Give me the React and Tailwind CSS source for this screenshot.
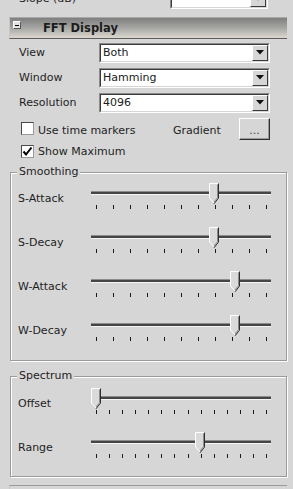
import React from "react";

function Combo({ value, wide }) {
  return (
    <div
      className={
        (wide ? "w-[171px] h-[20px]" : "w-[98px] h-[21px]") +
        " flex border border-t-[#8a8a8a] border-l-[#8a8a8a] border-r-white border-b-white"
      }
    >
      <div className="flex flex-1 border border-t-[#3a3a3a] border-l-[#3a3a3a] border-r-[#d6d6d6] border-b-[#d6d6d6] bg-white">
        <div className="flex-1 pl-[2px] leading-[16px] text-[#1a1a1a]">{value}</div>
        <div className="w-[16px] h-full flex items-center justify-center bg-[#d6d6d6] border border-t-white border-l-white border-r-[#3a3a3a] border-b-[#3a3a3a]">
          <svg width="8" height="5" viewBox="0 0 8 5">
            <polygon points="0,0 8,0 4,4.5" fill="#111" />
          </svg>
        </div>
      </div>
    </div>
  );
}

function Check({ checked }) {
  return (
    <div className="w-[13px] h-[13px] bg-white border border-t-[#4a4a4a] border-l-[#4a4a4a] border-r-[#9a9a9a] border-b-[#9a9a9a] flex items-center justify-center">
      {checked && (
        <svg width="11" height="11" viewBox="0 0 11 11">
          <path d="M1.5 5.5 L4 8.5 L9.5 1.5" stroke="#000" strokeWidth="2" fill="none" />
        </svg>
      )}
    </div>
  );
}

function Handle() {
  return (
    <svg width="11" height="22" viewBox="0 0 11 22">
      <polygon points="0.5,0.5 9.5,0.5 9.5,15 5,20.5 0.5,15" fill="#dadada" />
      <polyline points="0.5,15 0.5,0.5 9.5,0.5" stroke="#ffffff" fill="none" />
      <polyline points="0.5,15 5,20" stroke="#ffffff" fill="none" />
      <polyline points="9.5,0.5 9.5,15 5,20.8" stroke="#2e2e2e" fill="none" />
      <polyline points="8.5,1.5 8.5,14.6 5,19" stroke="#8a8a8a" fill="none" />
    </svg>
  );
}

function Slider({ label, pos, ticks }) {
  const tickList = [];
  for (let i = 0; i < ticks; i++) {
    tickList.push(Math.round(5 + (i * 170) / (ticks - 1)));
  }
  return (
    <div className="flex h-[30px]">
      <div className="w-[80px] pl-[7px] pt-[9px] leading-[13px]">{label}</div>
      <div className="relative w-[180px] h-[30px]">
        <div className="absolute left-0 right-0 top-[8px] h-[4px] border-t border-b border-t-[#8c8c8c] border-b-[#f4f4f4] bg-[#454545]" />
        {tickList.map((x, i) => (
          <div
            key={i}
            className="absolute top-[22px] h-[4px] w-[1px] bg-[#1a1a1a]"
            style={{ left: x }}
          />
        ))}
        <div className="absolute top-0" style={{ left: pos }}>
          <Handle />
        </div>
      </div>
    </div>
  );
}

function Group({ title, className, children }) {
  return (
    <div
      className={
        "relative ml-[10px] w-[277px] border border-[#9a9a9a] shadow-[inset_1px_1px_0_#ffffff,1px_1px_0_#ffffff] " +
        className
      }
    >
      <div className="absolute left-[6px] top-[-8px] px-[2px] bg-[#d6d6d6] leading-[13px]">{title}</div>
      {children}
    </div>
  );
}

export default function App() {
  return (
    <div className="w-[293px] h-[489px] overflow-hidden bg-[#d6d6d6] font-['DejaVu_Sans',sans-serif] text-[11px] leading-[13px] text-[#1e1e1e] flex flex-col">
      {/* partially visible row */}
      <div className="mt-[-12px] h-[21px] flex items-center">
        <div className="w-[170px] pl-[19px]">Slope (dB)</div>
        <Combo value="" />
      </div>

      {/* section header */}
      <div className="mt-[8px] ml-[9px] w-[278px] h-[22px] flex border-t border-b border-l border-t-[#a8a8a8] border-b-[#5c5c5c] border-l-[#c8c8c8] bg-gradient-to-b from-[#7f7f7f] via-[#a6a6a4] to-[#dcd8cf]">
        <div className="pl-[3px] pt-[3px]">
          <div className="w-[8px] h-[8px] flex items-center justify-center bg-[#e4e4e4] border border-t-white border-l-white border-r-[#5a5a5a] border-b-[#5a5a5a]">
            <div className="w-[4px] h-[1px] bg-black" />
          </div>
        </div>
        <div className="ml-[22px] pt-[4px] font-bold text-[11.5px] leading-[13px] text-[#1c1c1c]">FFT Display</div>
      </div>

      {/* combos */}
      <div className="mt-[4px] flex items-center h-[20px]">
        <div className="w-[99px] pl-[19px]">View</div>
        <Combo value="Both" wide />
      </div>
      <div className="mt-[5px] flex items-center h-[20px]">
        <div className="w-[99px] pl-[19px]">Window</div>
        <Combo value="Hamming" wide />
      </div>
      <div className="mt-[5px] flex items-center h-[20px]">
        <div className="w-[99px] pl-[19px]">Resolution</div>
        <Combo value="4096" wide />
      </div>

      {/* checkboxes */}
      <div className="mt-[5px] h-[22px] flex items-center">
        <div className="ml-[21px]">
          <Check />
        </div>
        <div className="ml-[4px] w-[135px] pt-[3px]">Use time markers</div>
        <div className="w-[66px] pt-[3px]">Gradient</div>
        <div className="w-[31px] h-[22px] flex items-center justify-center bg-[#d6d6d6] border border-t-white border-l-white border-r-[#2e2e2e] border-b-[#2e2e2e] shadow-[inset_-1px_-1px_0_#9a9a9a]">
          <span className="pt-[3px] text-[#3a4a5a]">...</span>
        </div>
      </div>
      <div className="mt-[5px] h-[13px] flex items-center">
        <div className="ml-[21px]">
          <Check checked />
        </div>
        <div className="ml-[4px] pt-[1px]">Show Maximum</div>
      </div>

      {/* Smoothing */}
      <Group title="Smoothing" className="mt-[14px] h-[190px] pt-[10px]">
        <div className="flex flex-col gap-[14px]">
          <Slider label="S-Attack" pos={118} ticks={11} />
          <Slider label="S-Decay" pos={118} ticks={11} />
          <Slider label="W-Attack" pos={139} ticks={11} />
          <Slider label="W-Decay" pos={139} ticks={11} />
        </div>
      </Group>

      {/* Spectrum */}
      <Group title="Spectrum" className="mt-[15px] h-[102px] pt-[11px]">
        <div className="flex flex-col gap-[14px]">
          <Slider label="Offset" pos={0} ticks={14} />
          <Slider label="Range" pos={104} ticks={14} />
        </div>
      </Group>

      <div className="mt-[8px] ml-[9px] w-[278px] h-[4px] border-t border-l border-t-[#9a9a9a] border-l-[#c8c8c8]" />
    </div>
  );
}
